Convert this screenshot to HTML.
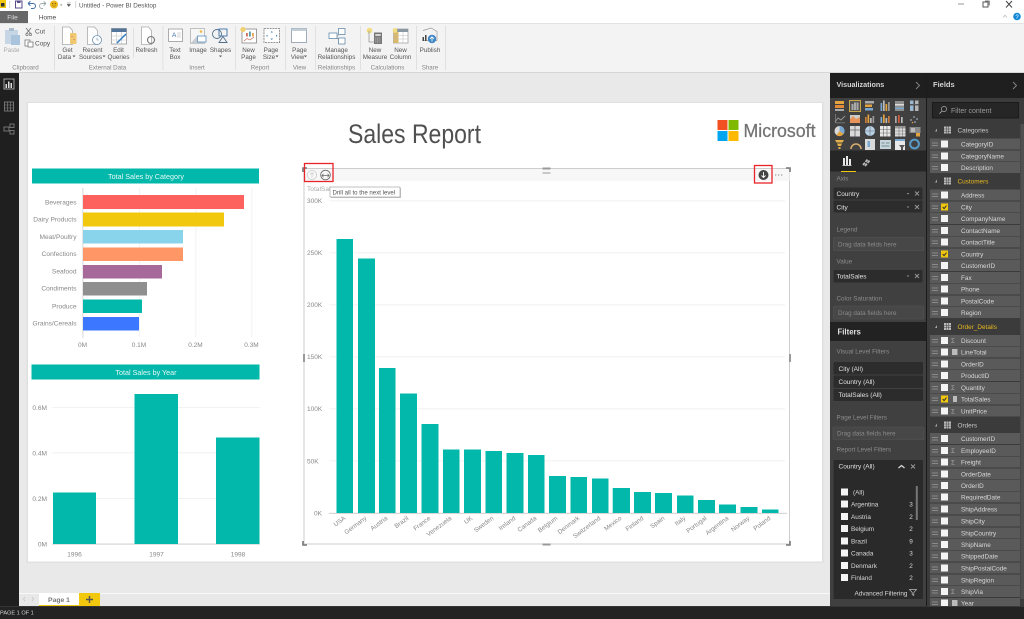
<!DOCTYPE html>
<html><head><meta charset="utf-8"><title>Power BI Desktop</title>
<style>
html,body{margin:0;padding:0;width:1024px;height:619px;overflow:hidden;background:#e8e8e8}
svg{display:block}
text{font-family:"Liberation Sans",sans-serif}
.rb{font-size:6.3px;fill:#555;text-anchor:middle}
.gp{font-size:6.2px;fill:#888;text-anchor:middle}
.ax{font-size:6.5px;fill:#888}
.axe{font-size:6.6px;fill:#888;text-anchor:end}
.axm{font-size:6.5px;fill:#888;text-anchor:middle}
.f{font-size:6.4px;fill:#d8d8d8}
.fh{font-size:6.4px;fill:#c8c8c8}
.fy{font-size:6.4px;fill:#e8b820}
.lb{font-size:6.3px;fill:#8c8c8c}
.w{font-size:6.5px;fill:#e0e0e0}
.dr{font-size:6.3px;fill:#8a8a8a}
.ic{fill:none;stroke:#7a7a7a;stroke-width:.8}
</style></head><body>
<svg width="1024" height="619" viewBox="0 0 1024 619" xmlns="http://www.w3.org/2000/svg">
<defs>
<g id="row"><rect x="930" y="-5.5" width="90" height="11" fill="#5a5a5a"/><rect x="932" y="-1.5" width="6" height="1" fill="#8a8a8a"/><rect x="932" y="1" width="6" height="1" fill="#8a8a8a"/><rect x="941" y="-3.5" width="7" height="7" fill="#f4f4f4"/></g>
<g id="chk"><rect x="941" y="-3.5" width="7" height="7" fill="#f2c80f"/><path d="M942.6 0l1.5 1.6 2.4-3" fill="none" stroke="#333" stroke-width="1"/></g>
<g id="tbl"><rect x="944" y="-3.5" width="7" height="7" fill="#bbb"/><path d="M944 -1h7M944 1.2h7M946.4 -3.5v7M948.7 -3.5v7" stroke="#444" stroke-width=".5"/><path d="M937 -1.5l0 3 -2 0z" fill="#aaa"/></g>
<g id="cb"><rect x="841" y="-3.5" width="7" height="7" fill="#f4f4f4"/></g>
</defs>

<!-- window chrome -->
<rect width="1024" height="23" fill="#fff"/>
<rect y="0" width="6" height="8" fill="#f2c80f"/><rect x="1" y="3" width="3.5" height="3.5" fill="#333"/>
<rect x="9.5" y="1" width=".6" height="7" fill="#bbb"/>
<rect x="15.5" y="1" width="6.5" height="7" fill="none" stroke="#5a4a8a" stroke-width="1"/><rect x="17" y="1" width="3.5" height="2" fill="#5a4a8a"/>
<path d="M28 3.5h5a2.500 2.500 0 0 1 0 5h-2M28 3.500l2.400-2.200M28 3.500l2.400 2.200" fill="none" stroke="#3f6fa8" stroke-width="1"/>
<path d="M46 3.500h-4a2.500 2.500 0 0 0 0 5h1M46 3.500l-2.400-2.200M46 3.500l-2.400 2.200" fill="none" stroke="#9aa" stroke-width=".9"/>
<circle cx="54" cy="4.500" r="4" fill="#eab71c"/><circle cx="52.700" cy="3.600" r=".6" fill="#7a5c00"/><circle cx="55.300" cy="3.600" r=".6" fill="#7a5c00"/><path d="M52.400 5.600q1.600 1.300 3.200 0" stroke="#7a5c00" stroke-width=".5" fill="none"/>
<path d="M60 4.500h2.400l-1.200 1.400z" fill="#777"/>
<path d="M67 3h3.600M67 4.400h3.600l-1.800 2.200z" fill="#555" stroke="#555" stroke-width=".4"/>
<rect x="75.500" y="1" width=".6" height="7" fill="#bbb"/>
<text x="79" y="7.300" style="font-size:6.300px;fill:#555">Untitled - Power BI Desktop</text>
<rect x="958" y="3.500" width="6" height="1" fill="#999"/>
<rect x="983" y="2" width="5" height="5" fill="none" stroke="#555" stroke-width="1"/><path d="M985 1h4.200v4.500" fill="none" stroke="#555" stroke-width=".8"/>
<path d="M1006 1l6 6.500M1012 1l-6 6.500" stroke="#444" stroke-width="1"/>
<path d="M1003 17.500l2-2.300 2 2.300" fill="none" stroke="#bbb" stroke-width=".8"/>
<circle cx="1017" cy="16.500" r="3.800" fill="#1188d8"/>
<text x="1017" y="18.800" text-anchor="middle" style="font-size:6px;fill:#fff">?</text>
<rect x="0" y="11" width="28" height="12" fill="#686868"/>
<text x="12.500" y="19.500" text-anchor="middle" style="font-size:6.500px;fill:#ddd">File</text>
<text x="47.500" y="19.500" text-anchor="middle" style="font-size:6.500px;fill:#444">Home</text>
<rect x="67.500" y="23" width="956" height=".7" fill="#d2d2d2"/><rect x="0" y="23" width="28" height=".7" fill="#d2d2d2"/>

<!-- ribbon -->
<rect y="23.500" width="1024" height="49" fill="#f3f3f3"/>
<rect y="72" width="1024" height="1" fill="#d6d6d6"/>
<g fill="#dcdcdc"><rect x="54" y="26" width=".8" height="44"/><rect x="162.500" y="26" width=".8" height="44"/><rect x="235" y="26" width=".8" height="44"/><rect x="285" y="26" width=".8" height="44"/><rect x="315" y="26" width=".8" height="44"/><rect x="360" y="26" width=".8" height="44"/><rect x="416" y="26" width=".8" height="44"/><rect x="445" y="26" width=".8" height="44"/><rect x="133" y="28" width=".8" height="30"/></g>

<!-- clipboard -->
<rect x="5" y="30" width="13" height="14" fill="#c6d6e4"/><rect x="9" y="28" width="5" height="3" fill="#a8bccd"/><rect x="11" y="35" width="9" height="10" fill="#a9c4dc"/>
<path d="M26 28l5 6M31 28l-5 6" stroke="#777" stroke-width=".9"/><circle cx="27" cy="34.500" r="1.200" fill="none" stroke="#777" stroke-width=".7"/><circle cx="30.500" cy="34.500" r="1.200" fill="none" stroke="#777" stroke-width=".7"/>
<rect x="25" y="40" width="5" height="6" class="ic" style="fill:#fff"/><rect x="28" y="42" width="5" height="5" class="ic" style="fill:#fff"/>
<text x="11.500" y="52" class="rb" style="fill:#aaa">Paste</text>
<text x="35" y="33.500" style="font-size:6.500px;fill:#555">Cut</text>
<text x="35" y="45.500" style="font-size:6.500px;fill:#555">Copy</text>
<text x="25.500" y="69.700" class="gp">Clipboard</text>

<!-- external data -->
<path d="M62.500 27h7l3 3.500v14h-10z" fill="#fff" stroke="#aaa" stroke-width=".8"/><rect x="70" y="33" width="6.500" height="11" rx="1" fill="#f0c870"/><rect x="71.500" y="36" width="1" height="1" fill="#c77"/><rect x="73.500" y="39" width="1" height="1" fill="#c77"/>
<path d="M87.500 27h7l3 3.500v14h-10z" fill="#fff" stroke="#aaa" stroke-width=".8"/><circle cx="97" cy="40" r="4.500" fill="#fff" stroke="#6a90b0" stroke-width=".8"/><path d="M97 37.500v2.500h2" stroke="#6a90b0" stroke-width=".6" fill="none"/>
<rect x="111.500" y="28.500" width="15" height="15.500" fill="#fff" stroke="#999" stroke-width=".8"/><rect x="111.500" y="28.500" width="15" height="3.500" fill="#53759a"/><path d="M111.500 36h15M111.500 40h15M116.500 32v12M121.500 32v12" stroke="#bbb" stroke-width=".5"/><path d="M117 43l9-9" stroke="#2f7fc0" stroke-width="1.500"/>
<path d="M141.500 27h7l3 3.500v14h-10z" fill="#fff" stroke="#aaa" stroke-width=".8"/><circle cx="151" cy="40" r="3.500" fill="none" stroke="#777" stroke-width="1.100"/>
<text x="67.500" y="52" class="rb">Get</text><text x="64.500" y="59" class="rb">Data</text><path d="M72.500 55.500h3l-1.500 1.700z" fill="#555"/>
<text x="92.500" y="52" class="rb">Recent</text><text x="90.500" y="59" class="rb">Sources</text><path d="M102.500 55.500h3l-1.500 1.700z" fill="#555"/>
<text x="118.500" y="52" class="rb">Edit</text><text x="118.500" y="59" class="rb">Queries</text>
<text x="146.500" y="52" class="rb">Refresh</text>
<text x="107.500" y="69.700" class="gp">External Data</text>

<!-- insert -->
<rect x="168.500" y="29" width="14" height="12.500" fill="#fff" stroke="#999" stroke-width=".8"/><text x="172" y="37" style="font-size:6.500px;fill:#3a6fa5">A</text><path d="M177 33h4M177 35h4M177 37h4" stroke="#aaa" stroke-width=".6"/>
<rect x="190.500" y="28.500" width="14" height="15" fill="#f6f6f6" stroke="#aaa" stroke-width=".7"/><path d="M190.500 43.500l7-8 7 8z" fill="#c6ccd2"/><circle cx="201" cy="31.500" r="1.300" fill="#efb94a"/><rect x="197.500" y="36" width="8.500" height="6" fill="#fff" stroke="#5a90bb" stroke-width=".8"/>
<circle cx="217" cy="34" r="4.500" fill="none" stroke="#54708a" stroke-width=".9"/><rect x="219" y="29" width="8" height="7" fill="none" stroke="#3f6fa8" stroke-width=".9"/><path d="M223 36.500l4 6h-8z" fill="none" stroke="#54708a" stroke-width=".9"/>
<text x="175" y="52" class="rb">Text</text><text x="175" y="59" class="rb">Box</text>
<text x="198" y="52" class="rb">Image</text>
<text x="220.500" y="52" class="rb">Shapes</text><path d="M219 55.500h3l-1.500 1.700z" fill="#555"/>
<text x="197" y="69.700" class="gp">Insert</text>

<!-- report -->
<rect x="242" y="29" width="14.500" height="14" fill="#fff" stroke="#888" stroke-width=".8"/><circle cx="243" cy="29.500" r="2.600" fill="#f0d070"/><rect x="246" y="33" width="1.800" height="3.500" fill="#cf6d5a"/><rect x="249" y="31.500" width="1.800" height="5" fill="#59a"/><rect x="252" y="33" width="1.800" height="3.500" fill="#e7a24a"/><path d="M244 41l3-2.500 3 1.500 4-3" stroke="#cf6d5a" stroke-width=".7" fill="none"/>
<rect x="264" y="28.500" width="15.500" height="14" fill="#fff" stroke="#777" stroke-width=".8" stroke-dasharray="2 .8"/><path d="M270.500 32.500h2.500l-1.200-1.500zM270.500 38.500h2.500l-1.200 1.500zM267.500 34.500v2.500l-1.400-1.200zM276 34.500v2.500l1.400-1.200z" fill="#4786b8"/>
<text x="248.500" y="52" class="rb">New</text><text x="248.500" y="59" class="rb">Page</text>
<text x="271" y="52" class="rb">Page</text><text x="269" y="59" class="rb">Size</text><path d="M275.500 55.500h3l-1.500 1.700z" fill="#555"/>
<text x="260" y="69.700" class="gp">Report</text>

<!-- view -->
<rect x="291.500" y="28.500" width="15" height="14" fill="#fff" stroke="#8a9aa8" stroke-width=".8"/><rect x="291.500" y="28.500" width="15" height="2.500" fill="#c2cdd6"/>
<text x="299.500" y="52" class="rb">Page</text><text x="297.500" y="59" class="rb">View</text><path d="M304 55.500h3l-1.500 1.700z" fill="#555"/>
<text x="299.500" y="69.700" class="gp">View</text>

<!-- relationships -->
<rect x="329" y="33" width="8" height="5.500" fill="#fff" stroke="#4f7da3" stroke-width=".7"/><rect x="338.500" y="28.500" width="6.500" height="6" fill="#fff" stroke="#4f7da3" stroke-width=".7"/><rect x="338.500" y="38" width="6.500" height="6" fill="#fff" stroke="#4f7da3" stroke-width=".7"/><path d="M337 35.500h1.500M337 37.500l1.500 2" stroke="#777" stroke-width=".6"/>
<text x="336.500" y="52" class="rb">Manage</text><text x="336.500" y="59" class="rb">Relationships</text>
<text x="336.500" y="69.700" class="gp">Relationships</text>

<!-- calculations -->
<circle cx="369.500" cy="30.500" r="2.800" fill="#f2dc80"/><path d="M369 31v11h5" fill="none" stroke="#999" stroke-width=".8"/><rect x="374" y="32.500" width="8" height="11.500" fill="#777"/><rect x="375.300" y="34" width="5.400" height="2" fill="#d4d4d4"/><path d="M375.300 38h5.400M375.300 40h5.400M375.300 42h5.400" stroke="#ddd" stroke-width=".7" stroke-dasharray="1 .7"/>
<rect x="393.500" y="29" width="14.500" height="14" fill="#fff" stroke="#999" stroke-width=".7"/><rect x="393.500" y="29" width="14.500" height="3" fill="#8a98a4"/><rect x="393.500" y="32" width="5" height="11" fill="#d9b86a"/><path d="M393.500 35.500h14.500M393.500 39h14.500M403 32v11" stroke="#bbb" stroke-width=".5"/><circle cx="395" cy="30.500" r="2.400" fill="#f2dc80"/>
<text x="375" y="52" class="rb">New</text><text x="375" y="59" class="rb">Measure</text>
<text x="400.500" y="52" class="rb">New</text><text x="400.500" y="59" class="rb">Column</text>
<text x="387.500" y="69.700" class="gp">Calculations</text>

<!-- publish -->
<path d="M423 30.500l8-2.500 6 3.500v9h-14" fill="none" stroke="#999" stroke-width=".7"/><rect x="422.500" y="37" width="1.500" height="4" fill="#444"/><rect x="425" y="35" width="1.500" height="6" fill="#444"/><circle cx="432" cy="39" r="4.200" fill="#3f88c5"/><path d="M432 41.500v-4.500M430 38.800l2-2 2 2" stroke="#fff" fill="none" stroke-width=".8"/>
<text x="430" y="52" class="rb">Publish</text>
<text x="430" y="69.700" class="gp">Share</text>

<!-- left rail -->
<rect y="73" width="19" height="533" fill="#1f1f1f"/>
<rect x="4" y="79" width="10" height="10" fill="none" stroke="#bdbdbd" stroke-width=".8"/><rect x="5.500" y="84" width="1.500" height="4" fill="#ddd"/><rect x="8" y="81.500" width="1.500" height="6.500" fill="#ddd"/><rect x="10.500" y="83" width="1.500" height="5" fill="#ddd"/>
<rect x="4.500" y="102" width="9" height="9" fill="none" stroke="#888" stroke-width=".8"/><path d="M4.500 105h9M4.500 108h9M7.500 102v9M10.500 102v9" stroke="#888" stroke-width=".6"/>
<rect x="4" y="127" width="5" height="4" fill="none" stroke="#888" stroke-width=".8"/><rect x="10" y="124" width="4" height="3.500" fill="none" stroke="#888" stroke-width=".8"/><rect x="10" y="130.500" width="4" height="3.500" fill="none" stroke="#888" stroke-width=".8"/>

<!-- canvas -->
<rect x="19" y="73" width="811" height="520" fill="#e9e9e9"/>
<rect x="26.500" y="102" width="797" height="461" fill="#e0e0e0"/>
<rect x="28" y="103" width="794" height="458.500" fill="#fff"/>

<text x="414.500" y="143" text-anchor="middle" textLength="133" lengthAdjust="spacingAndGlyphs" style="font-size:26.500px;fill:#505050">Sales Report</text>
<rect x="717.500" y="120" width="10" height="10" fill="#f25022"/><rect x="728.500" y="120" width="10" height="10" fill="#7fba00"/><rect x="717.500" y="131" width="10" height="10" fill="#00a4ef"/><rect x="728.500" y="131" width="10" height="10" fill="#ffb900"/>
<text x="743.500" y="137" textLength="72" lengthAdjust="spacingAndGlyphs" style="font-size:18px;fill:#737373;stroke:#737373;stroke-width:.25">Microsoft</text>

<!-- category chart -->
<rect x="32" y="168.500" width="227" height="15" fill="#01b8aa"/>
<text x="146" y="179" text-anchor="middle" style="font-size:7.200px;fill:#e8f8f6">Total Sales by Category</text>
<g fill="#eeeeee"><rect x="139" y="188" width=".8" height="149"/><rect x="195.500" y="188" width=".8" height="149"/><rect x="251.500" y="188" width=".8" height="149"/></g>
<rect x="82.500" y="188" width=".8" height="150" fill="#cfcfcf"/>
<rect x="83" y="195" width="161" height="14" fill="#fd625e"/>
<rect x="83" y="212.500" width="141" height="14" fill="#f2c80f"/>
<rect x="83" y="230" width="100" height="13.500" fill="#8ad4eb"/>
<rect x="83" y="247.500" width="100" height="13.500" fill="#fe9666"/>
<rect x="83" y="265" width="79" height="13.500" fill="#a66999"/>
<rect x="83" y="282" width="64" height="13.500" fill="#8f8f8f"/>
<rect x="83" y="299.500" width="59" height="13.500" fill="#01b8aa"/>
<rect x="83" y="317" width="56" height="13.500" fill="#3b78ff"/>
<g class="axe"><text x="76.500" y="204.500">Beverages</text><text x="76.500" y="221.500">Dairy Products</text><text x="76.500" y="239">Meat/Poultry</text><text x="76.500" y="256">Confections</text><text x="76.500" y="273.500">Seafood</text><text x="76.500" y="290.500">Condiments</text><text x="76.500" y="308.500">Produce</text><text x="76.500" y="325.500">Grains/Cereals</text></g>
<g class="axm"><text x="82.500" y="347">0M</text><text x="139" y="347">0.1M</text><text x="195.500" y="347">0.2M</text><text x="251.500" y="347">0.3M</text></g>

<!-- year chart -->
<rect x="31.500" y="364.500" width="228" height="15" fill="#01b8aa"/>
<text x="146" y="375" text-anchor="middle" style="font-size:7.200px;fill:#e8f8f6">Total Sales by Year</text>
<g fill="#eeeeee"><rect x="52" y="407" width="208" height=".8"/><rect x="52" y="452.500" width="208" height=".8"/><rect x="52" y="498" width="208" height=".8"/></g>
<rect x="52" y="543.500" width="208" height="1.200" fill="#d6d6d6"/>
<rect x="53" y="492.500" width="43" height="51.500" fill="#01b8aa"/>
<rect x="134.500" y="394" width="43.500" height="150" fill="#01b8aa"/>
<rect x="216" y="437.500" width="43.500" height="106.500" fill="#01b8aa"/>
<g class="axe"><text x="47" y="410">0.6M</text><text x="47" y="455.500">0.4M</text><text x="47" y="501">0.2M</text><text x="47" y="546.500">0M</text></g>
<g class="axm"><text x="74.500" y="556.500">1996</text><text x="156.500" y="556.500">1997</text><text x="238" y="556.500">1998</text></g>

<!-- main chart -->
<rect x="304" y="168.500" width="485.500" height="375.500" fill="#fff" stroke="#c8c8c8" stroke-width=".9"/>
<rect x="304.500" y="169" width="485" height="12" fill="#f7f7f7"/>
<g fill="#ededed"><rect x="329" y="200.500" width="456" height=".8"/><rect x="329" y="252.500" width="456" height=".8"/><rect x="329" y="304.500" width="456" height=".8"/><rect x="329" y="356.500" width="456" height=".8"/><rect x="329" y="408.500" width="456" height=".8"/><rect x="329" y="460.500" width="456" height=".8"/></g>
<rect x="329" y="512.800" width="458" height="1.200" fill="#d6d6d6"/>
<text x="307" y="191" style="font-size:6.600px;fill:#aaa">TotalSales</text>
<g class="ax"><text x="307" y="203">300K</text><text x="307" y="255">250K</text><text x="307" y="307">200K</text><text x="307" y="359">150K</text><text x="307" y="411">100K</text><text x="307" y="463.500">50K</text><text x="314" y="515.500">0K</text></g>
<g fill="#01b8aa">
<rect x="336.500" y="239" width="16.500" height="274"/><rect x="358" y="258.500" width="17" height="254.500"/><rect x="379" y="368" width="16.500" height="145"/><rect x="400" y="393.500" width="17" height="119.500"/><rect x="421.500" y="424" width="17" height="89"/><rect x="443" y="449.500" width="16.500" height="63.500"/><rect x="464" y="449.500" width="17" height="63.500"/><rect x="485.500" y="451" width="16.500" height="62"/><rect x="506.500" y="453" width="17" height="60"/><rect x="528" y="455" width="16.500" height="58"/><rect x="549" y="476" width="17" height="37"/><rect x="570.500" y="477" width="16.500" height="36"/><rect x="592" y="478.500" width="16.500" height="34.500"/><rect x="612.700" y="488" width="17.300" height="25"/><rect x="634" y="492" width="17" height="21"/><rect x="655" y="493" width="17" height="20"/><rect x="677" y="495.500" width="16.500" height="17.500"/><rect x="698" y="500" width="17" height="13"/><rect x="719" y="504.500" width="17" height="8.500"/><rect x="740.500" y="507" width="17" height="6"/><rect x="762" y="509.500" width="16.500" height="3.500"/>
</g>
<g class="axe" style="font-size:6.300px">
<text transform="translate(346,519) rotate(-37)">USA</text>
<text transform="translate(367,519) rotate(-37)">Germany</text>
<text transform="translate(388,519) rotate(-37)">Austria</text>
<text transform="translate(409,519) rotate(-37)">Brazil</text>
<text transform="translate(431,519) rotate(-37)">France</text>
<text transform="translate(452,519) rotate(-37)">Venezuela</text>
<text transform="translate(473,519) rotate(-37)">UK</text>
<text transform="translate(494,519) rotate(-37)">Sweden</text>
<text transform="translate(516,519) rotate(-37)">Ireland</text>
<text transform="translate(537,519) rotate(-37)">Canada</text>
<text transform="translate(558,519) rotate(-37)">Belgium</text>
<text transform="translate(580,519) rotate(-37)">Denmark</text>
<text transform="translate(601,519) rotate(-37)">Switzerland</text>
<text transform="translate(622,519) rotate(-37)">Mexico</text>
<text transform="translate(644,519) rotate(-37)">Finland</text>
<text transform="translate(665,519) rotate(-37)">Spain</text>
<text transform="translate(686,519) rotate(-37)">Italy</text>
<text transform="translate(707,519) rotate(-37)">Portugal</text>
<text transform="translate(729,519) rotate(-37)">Argentina</text>
<text transform="translate(750,519) rotate(-37)">Norway</text>
<text transform="translate(771,519) rotate(-37)">Poland</text>
</g>
<!-- handles -->
<path d="M303 172v-4h4M786 168h4v4M303 541v4h4M786 545h4v-4" fill="none" stroke="#777" stroke-width="1.600"/>
<rect x="542.500" y="167.500" width="8" height="2" fill="#999"/><rect x="542.500" y="172.500" width="8" height="1" fill="#999"/><rect x="542.500" y="543.500" width="8" height="2" fill="#999"/>
<rect x="303" y="354" width="2" height="8" fill="#999"/><rect x="789" y="354" width="2" height="8" fill="#999"/>
<!-- drill icons -->
<circle cx="312" cy="175" r="4.600" fill="none" stroke="#ccc" stroke-width=".8"/><path d="M312 178v-5.500M310 174.500l2-2 2 2" fill="none" stroke="#ccc" stroke-width=".7"/>
<circle cx="325.500" cy="175" r="4.800" fill="none" stroke="#666" stroke-width=".9"/><path d="M322 175.500h7M323.500 173.800l-1.500 1.700 1.500 1.700M327.500 173.800l1.500 1.700-1.500 1.700" fill="none" stroke="#666" stroke-width=".7"/>
<circle cx="763.500" cy="175" r="5" fill="#444"/><path d="M763.500 172v5.500M761.500 175.500l2 2 2-2" fill="none" stroke="#fff" stroke-width=".9"/>
<g fill="#888"><rect x="775" y="174.500" width="1.300" height="1"/><rect x="778" y="174.500" width="1.300" height="1"/><rect x="781" y="174.500" width="1.300" height="1"/></g>
<!-- tooltip -->
<rect x="331" y="188" width="70" height="10" fill="#c8c8c8"/>
<rect x="330" y="187" width="70" height="10" fill="#fff" stroke="#999" stroke-width=".6"/>
<text x="332.500" y="194.500" style="font-size:6.100px;fill:#555">Drill all to the next level</text>
<!-- red boxes -->
<g fill="none" stroke="#e8232a" stroke-width="1.300"><rect x="304.500" y="163.500" width="28.500" height="18"/><rect x="754.500" y="165.500" width="17.500" height="17.500"/><rect x="831.500" y="173.500" width="93" height="41.500"/></g>

<!-- tabs -->
<rect x="19" y="593" width="811" height="13" fill="#e8e8e8"/><rect x="19" y="593" width="811" height=".7" fill="#fff"/>
<path d="M25 597l-1.500 2 1.500 2M32 597l1.500 2-1.500 2" fill="none" stroke="#c2c2c2" stroke-width=".7"/>
<rect x="39" y="593" width="40" height="12" fill="#fff"/><rect x="39" y="605" width="40" height="1.200" fill="#f2c80f"/>
<text x="59" y="602" text-anchor="middle" style="font-size:6.800px;font-weight:bold;fill:#777">Page 1</text>
<rect x="79" y="593" width="21" height="13" fill="#f2c80f"/><path d="M89.500 596v7M86 599.500h7" stroke="#555" stroke-width="1.400"/>

<!-- status -->
<rect y="606" width="1024" height="13" fill="#232323"/><rect y="606" width="1024" height=".8" fill="#3a3a3a"/>
<text x="0" y="614.500" style="font-size:5.600px;fill:#d5d5d5">PAGE 1 OF 1</text>

<!-- viz panel -->
<rect x="830" y="73" width="96.500" height="533" fill="#404040"/>
<rect x="830" y="73" width="96.500" height="25" fill="#1f1f1f"/>
<text x="836.500" y="87" style="font-size:7.200px;font-weight:bold;fill:#d5d5d5">Visualizations</text>
<path d="M916 82l3.500 3.500-3.500 3.500" fill="none" stroke="#888" stroke-width=".9"/>
<rect x="926.500" y="73" width="97.500" height="533" fill="#3b3b3b"/>
<rect x="926" y="73" width="1" height="533" fill="#1a1a1a"/>
<rect x="926.500" y="73" width="97.500" height="25" fill="#1f1f1f"/>
<text x="933" y="87" style="font-size:7.500px;font-weight:bold;fill:#d5d5d5">Fields</text>
<path d="M1013 82l3.500 3.500-3.500 3.500" fill="none" stroke="#888" stroke-width=".9"/>
<!-- viz icons -->
<g>
<rect x="835" y="101" width="9" height="3" fill="#e3a33f"/><rect x="835" y="105" width="9" height="3" fill="#e08a3a"/><rect x="835" y="109" width="9" height="2" fill="#aaa"/>
<rect x="849.500" y="100.500" width="11" height="11" fill="#555" stroke="#d8b24a" stroke-width=".9"/><rect x="851.500" y="104" width="2" height="6" fill="#aaa"/><rect x="854" y="102.500" width="2" height="7.500" fill="#aaa"/><rect x="856.500" y="102.500" width="2" height="7.500" fill="#aaa"/>
<rect x="865" y="101" width="9" height="2.500" fill="#aaa"/><rect x="865" y="104.500" width="7" height="2.500" fill="#e3a33f"/><rect x="865" y="108" width="8" height="2.500" fill="#7aa8d0"/>
<rect x="880.500" y="103" width="1.700" height="8" fill="#7aa8d0"/><rect x="883" y="100.500" width="1.700" height="10.500" fill="#bbb"/><rect x="885.500" y="104" width="1.700" height="7" fill="#e3a33f"/><rect x="888" y="102" width="1.700" height="9" fill="#999"/>
<rect x="895" y="101" width="9" height="10" fill="#8f8f8f"/><rect x="895" y="104" width="9" height="1.500" fill="#ddd"/><rect x="895" y="107.500" width="9" height="1.500" fill="#7aa8d0"/>
<rect x="910" y="100.500" width="3.500" height="10.500" fill="#9ab8d0"/><rect x="915" y="100.500" width="3.500" height="10.500" fill="#b5b5b5"/><rect x="910" y="104" width="8.500" height="1.500" fill="#555"/>
<path d="M835 122l3-4 3 2 4-4" fill="none" stroke="#999" stroke-width=".9"/><rect x="835" y="114" width=".7" height="9" fill="#888"/><rect x="835" y="122.500" width="10" height=".7" fill="#888"/>
<rect x="850" y="115" width="10" height="8" fill="#e8935a"/><path d="M850 119l3-3 3 3 4-2v-2h-10z" fill="#ccc"/>
<rect x="865" y="117" width="1.700" height="6" fill="#c77a3a"/><rect x="867.500" y="114.500" width="1.700" height="8.500" fill="#e3a33f"/><rect x="870" y="118" width="1.700" height="5" fill="#bbb"/><rect x="872.500" y="116" width="1.700" height="7" fill="#999"/>
<rect x="880.500" y="117" width="1.700" height="6" fill="#7aa8d0"/><rect x="883" y="114.500" width="1.700" height="8.500" fill="#e3a33f"/><rect x="885.500" y="118" width="1.700" height="5" fill="#bbb"/><rect x="888" y="116" width="1.700" height="7" fill="#c77a3a"/>
<rect x="895" y="116" width="1.700" height="7" fill="#aaa"/><rect x="898" y="115" width="1.700" height="8" fill="#d05a3a"/><rect x="901" y="117" width="1.700" height="6" fill="#bbb"/>
<g fill="#9ab"><circle cx="911" cy="120" r=".9"/><circle cx="914" cy="117" r=".9"/><circle cx="917" cy="119" r=".9"/><circle cx="915" cy="122" r=".9"/></g><circle cx="912.500" cy="122.500" r=".8" fill="#e3a33f"/>
<circle cx="839.500" cy="131" r="5" fill="#d9d9d9"/><path d="M839.500 131v-5a5 5 0 0 1 4 8z" fill="#7aa8d0"/><path d="M839.500 131l4 3a5 5 0 0 1-7 1.200z" fill="#e3a33f"/>
<rect x="850" y="126" width="10" height="10.500" fill="#d9d9d9"/><path d="M850 130h10M855 126v10.500" stroke="#666" stroke-width=".8"/>
<circle cx="870" cy="131" r="5" fill="#b9d3e6"/><path d="M865 131h10M870 126v10" stroke="#667" stroke-width=".6"/>
<rect x="880" y="126" width="10.500" height="10.500" fill="#e8e8e8"/><path d="M880 129.500h10.500M880 133h10.500M883.500 126v10.500M887 126v10.500" stroke="#666" stroke-width=".6"/>
<rect x="895" y="126" width="10.500" height="10.500" fill="#ddd"/><rect x="895" y="126" width="10.500" height="2.500" fill="#999"/><path d="M895 131h10.500M895 134h10.500M899 126v10.500M902.500 126v10.500" stroke="#777" stroke-width=".6"/>
<rect x="909.500" y="127" width="11" height="6" fill="#8a8a8a"/><rect x="911" y="128" width="4" height="4" fill="#bbb"/><rect x="916" y="133" width="4" height="3.500" fill="#e3a33f"/>
<path d="M835 140h9l-1.500 2.500h-6zM837 143.500h5l-1 2.500h-3zM838.500 147h2v2h-2z" fill="#e3b04a"/>
<path d="M851 149a5 5 0 0 1 10 0" fill="none" stroke="#d8b070" stroke-width="1.500"/>
<rect x="865" y="139" width="10" height="11" fill="#d9d9d9"/><rect x="867.500" y="141" width="2.500" height="6" fill="#7aa8d0"/>
<rect x="880" y="140" width="11" height="9" fill="#c8d4dc"/><path d="M881.500 143h3M886 143h3.500M881.500 146h8" stroke="#577" stroke-width=".7"/>
<rect x="895" y="139" width="10" height="11" fill="#e8e8e8"/><rect x="895" y="139" width="10" height="2" fill="#7aa8d0"/><path d="M899 145h6l-2 2.500v2.500h-2v-2.500z" fill="#555"/>
<circle cx="914.500" cy="144" r="4.400" fill="none" stroke="#5a9ac8" stroke-width="2"/>
</g>
<!-- tabs on viz -->
<rect x="830" y="150.500" width="96" height="21" fill="#262626"/>
<rect x="841" y="171" width="15" height="1" fill="#f2c80f"/>
<rect x="843" y="158" width="2" height="7" fill="#e8e8e8"/><rect x="846" y="156" width="2" height="9" fill="#e8e8e8"/><rect x="849" y="159" width="2" height="6" fill="#e8e8e8"/><rect x="842.500" y="165" width="9" height=".8" fill="#e8e8e8"/>
<path d="M863 165l5-6M865 166l5-6" stroke="#bbb" stroke-width="1.800" fill="none" stroke-dasharray="3 1"/>
<!-- axis wells -->
<text x="836.500" y="180.500" class="lb">Axis</text>
<rect x="833.500" y="187.500" width="89" height="12" rx="1" fill="#2c2c2c"/><rect x="833.500" y="200.500" width="89" height="12" rx="1" fill="#2c2c2c"/>
<text x="836.500" y="196" class="w">Country</text><text x="836.500" y="209.500" class="w">City</text>
<path d="M906.500 193h3l-1.500 1.500zM906.500 206.500h3l-1.500 1.500z" fill="#888"/><path d="M915 191.500l4 4M919 191.500l-4 4M915 205l4 4M919 205l-4 4" stroke="#999" stroke-width=".9"/>
<text x="836.500" y="231.500" class="lb">Legend</text>
<rect x="833.500" y="237.500" width="90" height="13" rx="1" fill="#474747" stroke="#555" stroke-width=".6"/>
<text x="838" y="246.500" class="dr">Drag data fields here</text>
<text x="836.500" y="263.500" class="lb">Value</text>
<rect x="833.500" y="270" width="89" height="12.500" rx="1" fill="#2c2c2c"/>
<text x="836.500" y="278.500" class="w">TotalSales</text>
<path d="M906.500 275.500h3l-1.500 1.500z" fill="#888"/><path d="M915 274l4 4M919 274l-4 4" stroke="#999" stroke-width=".9"/>
<text x="836.500" y="300.500" class="lb">Color Saturation</text>
<rect x="833.500" y="306" width="90" height="13" rx="1" fill="#474747" stroke="#555" stroke-width=".6"/>
<text x="838" y="315" class="dr">Drag data fields here</text>
<!-- filters -->
<rect x="830" y="322" width="96" height="19" fill="#222"/>
<text x="837.500" y="334.500" style="font-size:7.800px;font-weight:bold;fill:#e0e0e0">Filters</text>
<text x="836.500" y="353.500" class="lb">Visual Level Filters</text>
<rect x="833.500" y="362" width="89.500" height="12.500" rx="1" fill="#2c2c2c"/><rect x="833.500" y="375.500" width="89.500" height="12.500" rx="1" fill="#2c2c2c"/><rect x="833.500" y="389" width="89.500" height="12" rx="1" fill="#2c2c2c"/>
<text x="838.500" y="371" class="w">City (All)</text><text x="838.500" y="384" class="w">Country (All)</text><text x="838.500" y="397" class="w">TotalSales (All)</text>
<text x="836.500" y="419.500" class="lb">Page Level Filters</text>
<rect x="833" y="427" width="91" height="12.500" rx="1" fill="#474747" stroke="#555" stroke-width=".6"/>
<text x="837" y="435.500" class="dr">Drag data fields here</text>
<text x="836.500" y="451.500" class="lb">Report Level Filters</text>
<rect x="833.500" y="460" width="89.500" height="139" rx="1" fill="#2a2a2a"/>
<text x="838.500" y="468.500" class="w">Country (All)</text>
<path d="M898.500 468l3-2.500 3 2.500" fill="none" stroke="#ddd" stroke-width="1.200"/>
<path d="M911 464.500l4 4M915 464.500l-4 4" stroke="#999" stroke-width=".9"/>
<rect x="915.800" y="486" width="2" height="34" fill="#777"/>
<use href="#cb" y="492"/><use href="#cb" y="504"/><use href="#cb" y="516.500"/><use href="#cb" y="528.500"/><use href="#cb" y="541"/><use href="#cb" y="553"/><use href="#cb" y="565.500"/><use href="#cb" y="577.500"/>
<g class="f"><text x="853" y="494.500">(All)</text><text x="851" y="506.500">Argentina</text><text x="851" y="519">Austria</text><text x="851" y="531">Belgium</text><text x="851" y="543.500">Brazil</text><text x="851" y="555.500">Canada</text><text x="851" y="568">Denmark</text><text x="851" y="580">Finland</text></g>
<g class="f" text-anchor="middle"><text x="911" y="506.500">3</text><text x="911" y="519">2</text><text x="911" y="531">2</text><text x="911" y="543.500">9</text><text x="911" y="555.500">3</text><text x="911" y="568">2</text><text x="911" y="580">2</text></g>
<text x="854.500" y="595.500" class="f">Advanced Filtering</text>
<path d="M909.500 589.500h7l-2.700 3v3l-1.600-1v-2z" fill="none" stroke="#bbb" stroke-width=".7"/>

<!-- fields -->
<rect x="932.500" y="102.500" width="86" height="15.500" fill="#262626" stroke="#161616" stroke-width=".8"/>
<circle cx="944" cy="109" r="2.600" fill="none" stroke="#aaa" stroke-width=".7"/><path d="M942 111l-2.500 2.700" stroke="#aaa" stroke-width=".8"/>
<text x="951" y="113" style="font-size:7px;fill:#999">Filter content</text>
<rect x="1020.500" y="124" width="3.500" height="475" fill="#505050"/>

<use href="#tbl" y="130"/><text x="957.500" y="132.500" class="fh">Categories</text>
<use href="#row" y="144"/><text x="961" y="146.300" class="f">CategoryID</text>
<use href="#row" y="156"/><text x="961" y="158.300" class="f">CategoryName</text>
<use href="#row" y="167.500"/><text x="961" y="169.800" class="f">Description</text>
<use href="#tbl" y="181"/><text x="957.500" y="183.500" class="fy">Customers</text>
<use href="#row" y="195"/><text x="961" y="197.300" class="f">Address</text>
<use href="#row" y="207"/><use href="#chk" y="207"/><text x="961" y="209.300" class="f">City</text>
<use href="#row" y="218.500"/><text x="961" y="220.800" class="f">CompanyName</text>
<use href="#row" y="230.500"/><text x="961" y="232.800" class="f">ContactName</text>
<use href="#row" y="242"/><text x="961" y="244.300" class="f">ContactTitle</text>
<use href="#row" y="254"/><use href="#chk" y="254"/><text x="961" y="256.300" class="f">Country</text>
<use href="#row" y="265.500"/><text x="961" y="267.800" class="f">CustomerID</text>
<use href="#row" y="277.500"/><text x="961" y="279.800" class="f">Fax</text>
<use href="#row" y="289"/><text x="961" y="291.300" class="f">Phone</text>
<use href="#row" y="301"/><text x="961" y="303.300" class="f">PostalCode</text>
<use href="#row" y="312.500"/><text x="961" y="314.800" class="f">Region</text>
<use href="#tbl" y="326.500"/><text x="957.500" y="329" class="fy">Order_Details</text>
<use href="#row" y="340.500"/><text x="951" y="342.800" class="f" style="fill:#aaa">Σ</text><text x="961" y="342.800" class="f">Discount</text>
<use href="#row" y="352"/><rect x="952" y="349" width="5.500" height="6" fill="#bbb"/><text x="961" y="354.300" class="f">LineTotal</text>
<use href="#row" y="364"/><text x="961" y="366.300" class="f">OrderID</text>
<use href="#row" y="375.500"/><text x="961" y="377.800" class="f">ProductID</text>
<use href="#row" y="387.500"/><text x="951" y="389.800" class="f" style="fill:#aaa">Σ</text><text x="961" y="389.800" class="f">Quantity</text>
<use href="#row" y="399"/><use href="#chk" y="399"/><rect x="953" y="396" width="4" height="6" fill="#bbb"/><text x="961" y="401.300" class="f">TotalSales</text>
<use href="#row" y="411"/><text x="951" y="413.300" class="f" style="fill:#aaa">Σ</text><text x="961" y="413.300" class="f">UnitPrice</text>
<use href="#tbl" y="425"/><text x="957.500" y="427.500" class="fh">Orders</text>
<use href="#row" y="438.500"/><text x="961" y="440.800" class="f">CustomerID</text>
<use href="#row" y="450.500"/><text x="951" y="452.800" class="f" style="fill:#aaa">Σ</text><text x="961" y="452.800" class="f">EmployeeID</text>
<use href="#row" y="462"/><text x="951" y="464.300" class="f" style="fill:#aaa">Σ</text><text x="961" y="464.300" class="f">Freight</text>
<use href="#row" y="474"/><text x="961" y="476.300" class="f">OrderDate</text>
<use href="#row" y="485.500"/><text x="961" y="487.800" class="f">OrderID</text>
<use href="#row" y="497"/><text x="961" y="499.300" class="f">RequiredDate</text>
<use href="#row" y="509"/><text x="961" y="511.300" class="f">ShipAddress</text>
<use href="#row" y="521"/><text x="961" y="523.300" class="f">ShipCity</text>
<use href="#row" y="533"/><text x="961" y="535.300" class="f">ShipCountry</text>
<use href="#row" y="544.500"/><text x="961" y="546.800" class="f">ShipName</text>
<use href="#row" y="556"/><text x="961" y="558.300" class="f">ShippedDate</text>
<use href="#row" y="568"/><text x="961" y="570.300" class="f">ShipPostalCode</text>
<use href="#row" y="580"/><text x="961" y="582.300" class="f">ShipRegion</text>
<use href="#row" y="591.500"/><text x="951" y="593.800" class="f" style="fill:#aaa">Σ</text><text x="961" y="593.800" class="f">ShipVia</text>
<rect x="930" y="598" width="90" height="8" fill="#5a5a5a"/><rect x="932" y="601.500" width="6" height="1" fill="#8a8a8a"/><rect x="932" y="604" width="6" height="1" fill="#8a8a8a"/><rect x="941" y="599.500" width="7" height="6.500" fill="#f4f4f4"/><rect x="952" y="600" width="5.500" height="6" fill="#bbb"/><text x="961" y="605.300" class="f">Year</text>
<rect y="606" x="926" width="98" height=".8" fill="#3a3a3a"/>
</svg>
</body></html>
